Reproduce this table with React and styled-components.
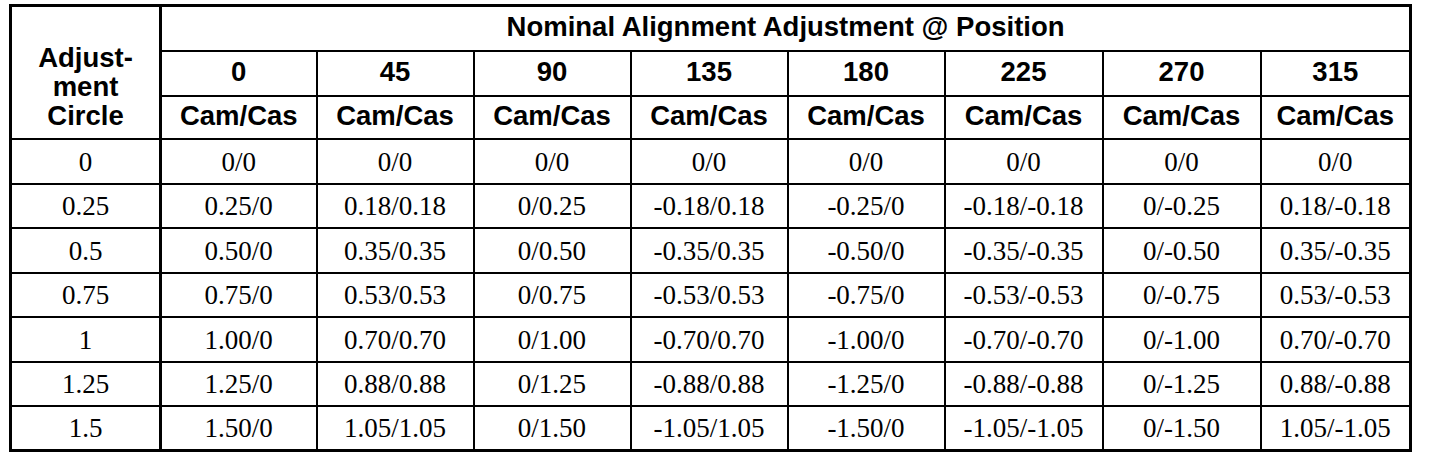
import React from "react";
import styled, { createGlobalStyle } from "styled-components";

const Global = createGlobalStyle`
  html, body { margin: 0; padding: 0; background: #fff; }
  body { font-family: "Liberation Serif", "Times New Roman", serif; color: #000; }
`;

const Page = styled.div`
  padding: 4px 0 0 9px;
`;

const Table = styled.table`
  border-collapse: collapse;
  table-layout: fixed;
  width: 1400px;
  border: 3px solid #000;
`;

const Row = styled.tr`
  height: ${(p) => p.$h}px;
`;

const Head = styled.th`
  font-family: "Liberation Sans", Arial, sans-serif;
  font-weight: bold;
  font-size: 27.5px;
  line-height: 28px;
  text-align: center;
  vertical-align: middle;
  padding: 0 0 2px 0;
  border: 2px solid #000;
  border-right-width: ${(p) => (p.$thick ? 3 : 2)}px;
  white-space: nowrap;
`;

const CornerHead = styled(Head)`
  vertical-align: bottom;
  padding-bottom: 8px;
  line-height: 29px;
`;

const Cell = styled.td`
  font-family: "Liberation Serif", "Times New Roman", serif;
  font-size: 27px;
  text-align: center;
  vertical-align: middle;
  padding: 2px 0 0 0;
  border: 2px solid #000;
  border-right-width: ${(p) => (p.$thick ? 3 : 2)}px;
  white-space: nowrap;
`;

const positions = ["0", "45", "90", "135", "180", "225", "270", "315"];
const widths = [150, 156, 157, 157, 157, 157, 158, 158, 150];

const rows = [
  ["0", "0/0", "0/0", "0/0", "0/0", "0/0", "0/0", "0/0", "0/0"],
  ["0.25", "0.25/0", "0.18/0.18", "0/0.25", "-0.18/0.18", "-0.25/0", "-0.18/-0.18", "0/-0.25", "0.18/-0.18"],
  ["0.5", "0.50/0", "0.35/0.35", "0/0.50", "-0.35/0.35", "-0.50/0", "-0.35/-0.35", "0/-0.50", "0.35/-0.35"],
  ["0.75", "0.75/0", "0.53/0.53", "0/0.75", "-0.53/0.53", "-0.75/0", "-0.53/-0.53", "0/-0.75", "0.53/-0.53"],
  ["1", "1.00/0", "0.70/0.70", "0/1.00", "-0.70/0.70", "-1.00/0", "-0.70/-0.70", "0/-1.00", "0.70/-0.70"],
  ["1.25", "1.25/0", "0.88/0.88", "0/1.25", "-0.88/0.88", "-1.25/0", "-0.88/-0.88", "0/-1.25", "0.88/-0.88"],
  ["1.5", "1.50/0", "1.05/1.05", "0/1.50", "-1.05/1.05", "-1.50/0", "-1.05/-1.05", "0/-1.50", "1.05/-1.05"],
];
const rowHeights = [45, 44, 45, 44, 45, 44, 45];

export default function App() {
  return (
    <Page>
      <Global />
      <Table>
        <colgroup>
          {widths.map((w, i) => (
            <col key={i} style={{ width: w }} />
          ))}
        </colgroup>
        <thead>
          <Row $h={45}>
            <CornerHead rowSpan={3} $thick>
              Adjust-
              <br />
              ment
              <br />
              Circle
            </CornerHead>
            <Head colSpan={8}>Nominal Alignment Adjustment @ Position</Head>
          </Row>
          <Row $h={45}>
            {positions.map((p) => (
              <Head key={p}>{p}</Head>
            ))}
          </Row>
          <Row $h={43}>
            {positions.map((p) => (
              <Head key={p}>Cam/Cas</Head>
            ))}
          </Row>
        </thead>
        <tbody>
          {rows.map((r, i) => (
            <Row key={i} $h={rowHeights[i]}>
              {r.map((v, j) => (
                <Cell key={j} $thick={j === 0}>
                  {v}
                </Cell>
              ))}
            </Row>
          ))}
        </tbody>
      </Table>
    </Page>
  );
}
